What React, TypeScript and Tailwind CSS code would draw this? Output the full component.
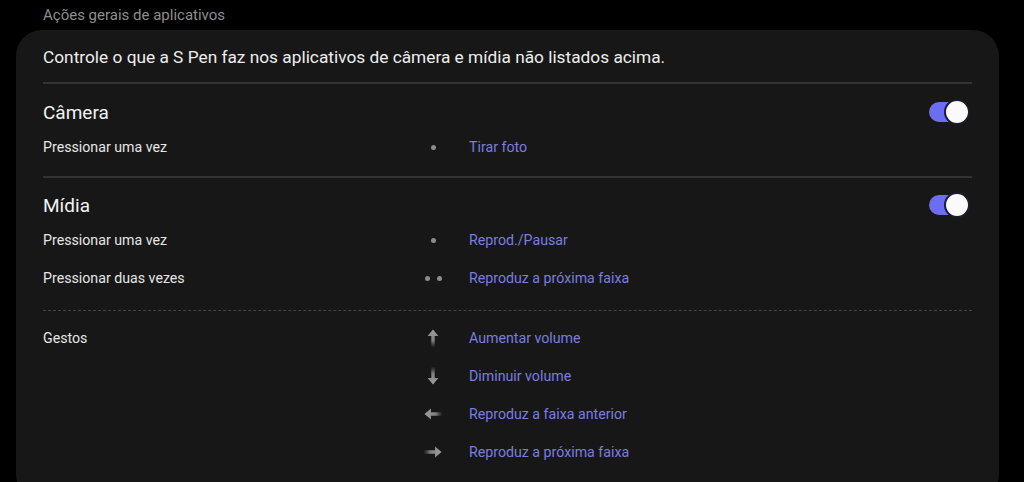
import React from "react";

const LINK = "text-[#7b7de0]";

function Dot() {
  return <span className="block w-[5px] h-[5px] rounded-full bg-[#8c8c8c]" />;
}

function Arrow({ dir }: { dir: "up" | "down" | "left" | "right" }) {
  const rot = { up: 0, right: 90, down: 180, left: 270 }[dir];
  const id = "g-" + dir;
  return (
    <svg width="22" height="22" viewBox="0 0 22 22" style={{ transform: `rotate(${rot}deg)` }}>
      <defs>
        <linearGradient id={id} x1="0" y1="0" x2="0" y2="1">
          <stop offset="0" stopColor="#a0a0a0" stopOpacity="1" />
          <stop offset="0.65" stopColor="#8a8a8a" stopOpacity="0.9" />
          <stop offset="1" stopColor="#6a6a6a" stopOpacity="0.1" />
        </linearGradient>
      </defs>
      <path d="M11 2.5 L5.6 9 H9.3 V20 H12.7 V9 H16.4 Z" fill={`url(#${id})`} />
    </svg>
  );
}

function Toggle() {
  return (
    <div className="relative w-[41px] h-[26px] mr-[2px]">
      <div className="absolute left-0 top-[3px] w-[34px] h-[20px] rounded-full bg-[#6b6ef2]" />
      <div className="absolute right-0 top-0 w-[26px] h-[26px] rounded-full bg-[#fafafa] border-[2px] border-[#1c1c2a]" />
    </div>
  );
}

function ActionRow({ label, icon, action }: { label: string; icon: React.ReactNode; action: string }) {
  return (
    <div className="flex items-center h-[38px]">
      <div className="w-[372px] pt-[3px] text-[14.2px] text-[#e6e6e6]">{label}</div>
      <div className="w-[36px] flex justify-center items-center pt-[2px]">{icon}</div>
      <div className={`ml-[18px] pt-[3px] text-[14.2px] ${LINK}`}>{action}</div>
    </div>
  );
}

function Divider() {
  return <div className="h-[2px] bg-[#333333]" />;
}

export default function App() {
  return (
    <div
      className="w-[1024px] h-[482px] bg-black overflow-hidden"
      style={{ fontFamily: "Roboto, 'Noto Sans', sans-serif" }}
    >
      <div className="h-[30px] flex items-center pl-[43px] text-[15px] text-[#8e8e8e]">
        Ações gerais de aplicativos
      </div>
      <div className="ml-[16px] w-[983px] h-[470px] rounded-[26px] bg-[#171717] px-[27px]">
        <div className="h-[52px] flex items-center pt-[4px] text-[17.3px] text-[#ededed]">
          Controle o que a S Pen faz nos aplicativos de câmera e mídia não listados acima.
        </div>
        <Divider />
        <div className="pt-[13px] pb-[11px]">
          <div className="h-[30px] flex items-center justify-between">
            <span className="text-[19px] pt-[3px] text-[#f2f2f2]">Câmera</span>
            <Toggle />
          </div>
          <ActionRow label="Pressionar uma vez" icon={<Dot />} action="Tirar foto" />
        </div>
        <Divider />
        <div className="pt-[12px] pb-[14px]">
          <div className="h-[30px] flex items-center justify-between">
            <span className="text-[19px] pt-[3px] text-[#f2f2f2]">Mídia</span>
            <Toggle />
          </div>
          <ActionRow label="Pressionar uma vez" icon={<Dot />} action="Reprod./Pausar" />
          <ActionRow
            label="Pressionar duas vezes"
            icon={
              <span className="flex gap-[7px]">
                <Dot />
                <Dot />
              </span>
            }
            action="Reproduz a próxima faixa"
          />
        </div>
        <div className="border-t border-dashed border-[#444444]" />
        <div className="pt-[7px]">
          <ActionRow label="Gestos" icon={<Arrow dir="up" />} action="Aumentar volume" />
          <ActionRow label="" icon={<Arrow dir="down" />} action="Diminuir volume" />
          <ActionRow label="" icon={<Arrow dir="left" />} action="Reproduz a faixa anterior" />
          <ActionRow label="" icon={<Arrow dir="right" />} action="Reproduz a próxima faixa" />
        </div>
      </div>
    </div>
  );
}
